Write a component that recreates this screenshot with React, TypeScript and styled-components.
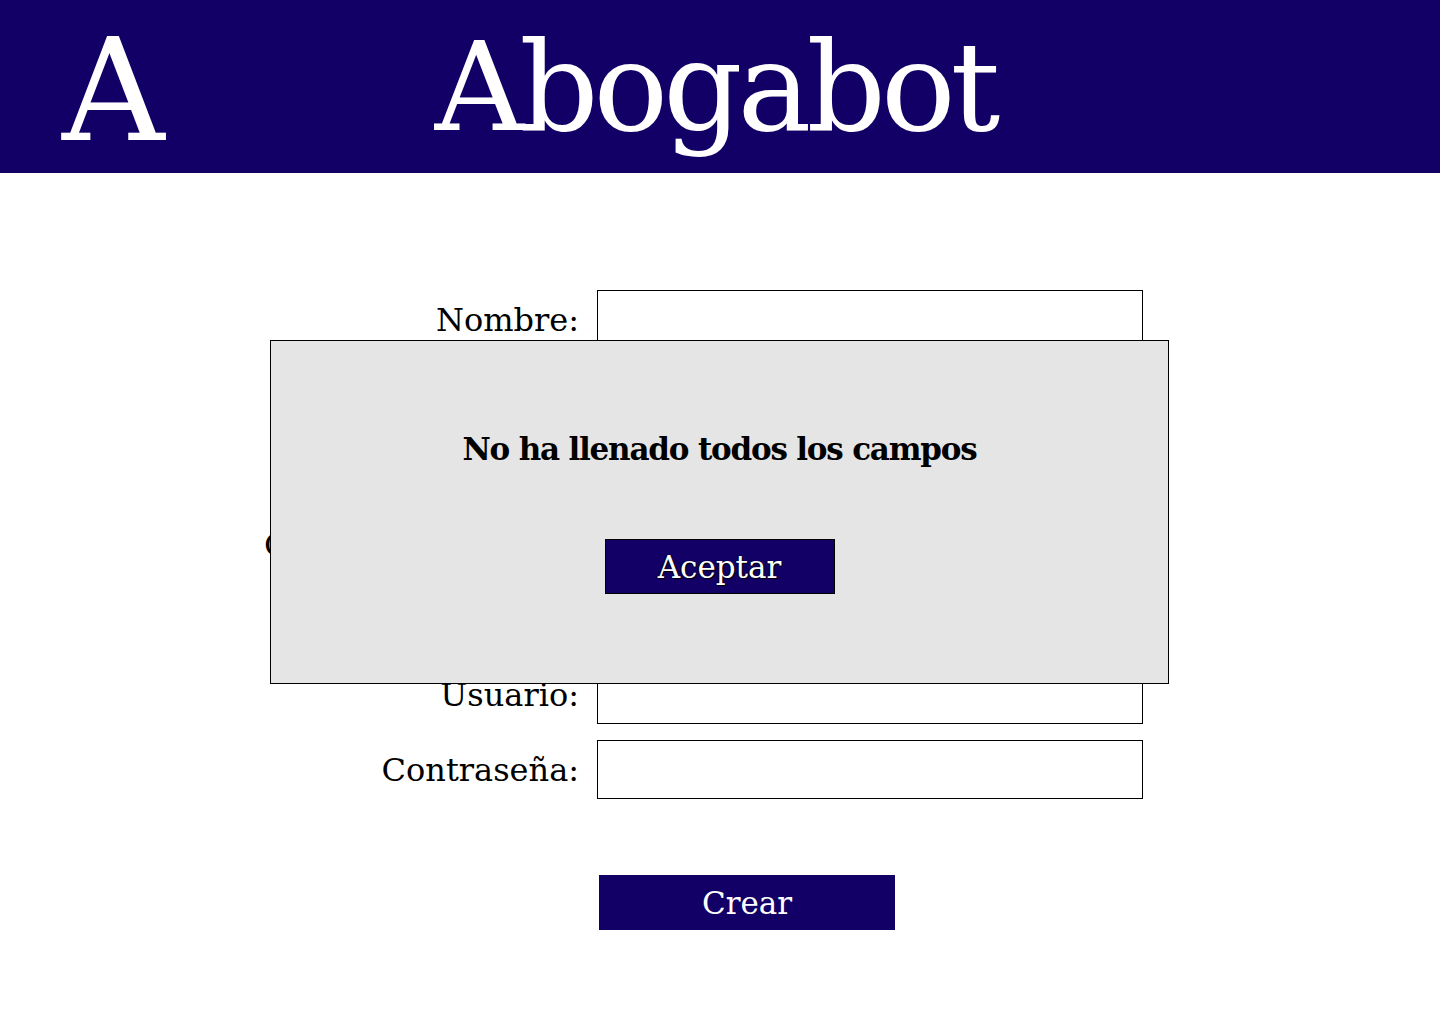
import React from "react";
import styled, { createGlobalStyle } from "styled-components";

const NAVY = "#120066";

const GlobalStyle = createGlobalStyle`
  html, body {
    margin: 0;
    padding: 0;
    background: #ffffff;
    font-family: "DejaVu Serif", "Liberation Serif", serif;
    color: #000;
  }
`;

const Page = styled.div`
  position: relative;
  width: 1440px;
  min-height: 1024px;
`;

const Header = styled.header`
  display: grid;
  grid-template-columns: 1fr auto 1fr;
  align-items: start;
  height: 173px;
  background: ${NAVY};
  color: #ffffff;
`;

const Logo = styled.div`
  justify-self: start;
  margin: 20px 0 0 62px;
  font-size: 142px;
  line-height: 1;
`;

const Title = styled.h1`
  margin: 25px 10px 0 0;
  font-size: 124px;
  font-weight: normal;
  line-height: 1;
  letter-spacing: -5px;
`;

const Form = styled.form`
  display: grid;
  grid-template-columns: 579px 546px;
  column-gap: 18px;
  row-gap: 16px;
  margin-top: 117px;
  align-items: center;
`;

const Label = styled.label`
  justify-self: end;
  font-size: 32px;
  line-height: normal;
  white-space: nowrap;
`;

const Input = styled.input`
  box-sizing: border-box;
  width: 546px;
  height: 59px;
  border: 1px solid #000;
  background: #fff;
  margin: 0;
  padding: 0 8px;
  font-family: inherit;
  font-size: 24px;
`;

const PrimaryButton = styled.button<{ $width: number; $bordered?: boolean }>`
  box-sizing: border-box;
  width: ${(p) => p.$width}px;
  height: 55px;
  background: ${NAVY};
  color: #ffffff;
  border: ${(p) => (p.$bordered ? "1px solid #000" : "none")};
  margin: 0;
  padding: 0;
  font-family: "DejaVu Serif", "Liberation Serif", serif;
  font-size: 31px;
  line-height: normal;
  cursor: pointer;
`;

const CreateButton = styled(PrimaryButton)`
  grid-column: 2;
  justify-self: start;
  margin: 60px 0 0 2px;
  font-size: 31px;
`;

const ModalBox = styled.div`
  position: absolute;
  left: 270px;
  top: 340px;
  box-sizing: border-box;
  width: 899px;
  height: 344px;
  background: #e5e5e5;
  border: 1px solid #000;
  display: flex;
  flex-direction: column;
  align-items: center;
  padding-top: 90px;
`;

const ModalTitle = styled.h2`
  margin: 0 0 72px 0;
  font-size: 31px;
  font-weight: bold;
  line-height: normal;
  letter-spacing: -1.2px;
`;

const AcceptButton = styled(PrimaryButton)`
  text-shadow: 1px 1px 1px #000, -1px 0 1px #000;
`;

const fields = [
  "Nombre:",
  "Apellido paterno:",
  "Apellido materno:",
  "Correo electrónico:",
  "Teléfono:",
  "Usuario:",
  "Contraseña:",
];

export default function App() {
  return (
    <Page>
      <GlobalStyle />
      <Header>
        <Logo>A</Logo>
        <Title>Abogabot</Title>
        <div />
      </Header>
      <Form onSubmit={(e) => e.preventDefault()}>
        {fields.map((f, i) => (
          <React.Fragment key={f}>
            <Label htmlFor={`f${i}`}>{f}</Label>
            <Input id={`f${i}`} type={f === "Contraseña:" ? "password" : "text"} />
          </React.Fragment>
        ))}
        <CreateButton $width={296} type="submit">
          Crear
        </CreateButton>
      </Form>
      <ModalBox role="dialog">
        <ModalTitle>No ha llenado todos los campos</ModalTitle>
        <AcceptButton $width={230} $bordered type="button">
          Aceptar
        </AcceptButton>
      </ModalBox>
    </Page>
  );
}
